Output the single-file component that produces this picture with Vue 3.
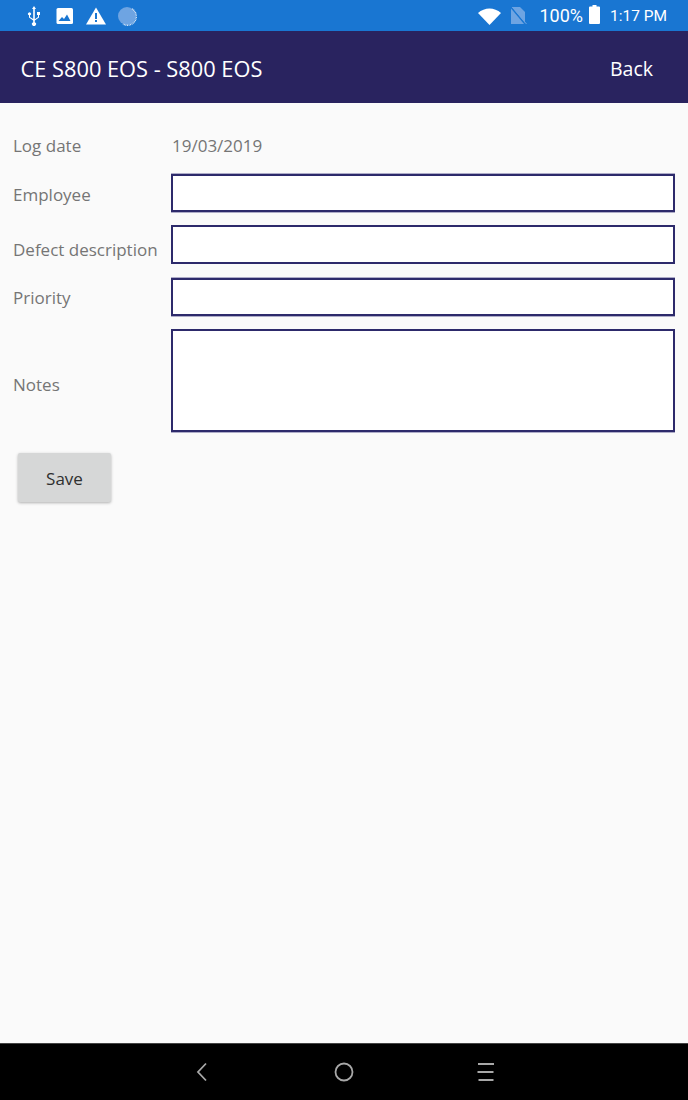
<script setup>
const rows = [
  { label: 'Employee', cls: 'r1' },
  { label: 'Defect description', cls: 'r2' },
  { label: 'Priority', cls: 'r3' },
]
</script>

<template>
  <div class="screen">
    <div class="status">
      <div class="status-left">
        <svg class="ic usb" width="16" height="20" viewBox="0 0 16 20" fill="#fff">
          <path d="M8 0l2 3H8.800v10.200l3.200-2.200V9H11V6h3v3h-1v2.600L8.800 14.600v1.600a2 2 0 1 1-1.600 0v-1.800L3 11.400V9.300a1.500 1.500 0 1 1 1 0v1.600l3.200 2.200V3H6z"/>
        </svg>
        <svg class="ic" width="18" height="18" viewBox="0 0 18 18">
          <rect x="0.500" y="1" width="16.500" height="16" rx="1.500" fill="#fff"/>
          <path d="M2.500 14l3.500-4 2 2 3-4.500 3.500 6.500z" fill="#1976d2"/>
        </svg>
        <svg class="ic warn" width="20" height="18" viewBox="0 0 20 18">
          <path d="M10 0.500L20 17.500H0z" fill="#fff"/>
          <rect x="9" y="6" width="2" height="6" fill="#1976d2"/>
          <rect x="9" y="13" width="2" height="2" fill="#1976d2"/>
        </svg>
        <svg class="ic" width="20" height="20" viewBox="0 0 20 20">
          <circle cx="10" cy="10" r="9" fill="#6ea4e2"/>
          <path d="M15 2.800A8.800 8.800 0 0 1 6 18" fill="none" stroke="#dbe8f8" stroke-width="1.400" stroke-dasharray="1 .6"/>
        </svg>
      </div>
      <div class="status-right">
        <svg class="wifi" width="23" height="18" viewBox="0 0 23 18">
          <path d="M0 6C6.500 0 16.500 0 23 6L11.500 18z" fill="#fff"/>
        </svg>
        <svg class="sim" width="17" height="17" viewBox="0 0 17 17">
          <path d="M1 0h9l5 5v12H1z" fill="#6ea4e2"/>
          <path d="M0 -1l15 18" stroke="#1976d2" stroke-width="1.500"/>
          <path d="M1.500 -1l15 18" stroke="#6ea4e2" stroke-width="1"/>
        </svg>
        <span class="pct">100%</span>
        <svg class="batt" width="11" height="19" viewBox="0 0 11 19">
          <path d="M3.500 0h4v1.500H10a1 1 0 0 1 1 1V18a1 1 0 0 1-1 1H1a1 1 0 0 1-1-1V2.500a1 1 0 0 1 1-1h2.500z" fill="#fff"/>
        </svg>
        <span class="time">1:17 PM</span>
      </div>
    </div>

    <header class="bar">
      <span class="title">CE S800 EOS - S800 EOS</span>
      <span class="back">Back</span>
    </header>

    <main class="content">
      <div class="row date-row">
        <span class="label">Log date</span>
        <span class="value">19/03/2019</span>
      </div>
      <div v-for="r in rows" :key="r.label" class="row" :class="r.cls">
        <span class="label">{{ r.label }}</span>
        <div class="field"></div>
      </div>
      <div class="row notes-row">
        <span class="label">Notes</span>
        <div class="field notes"></div>
      </div>
      <button class="save" type="button">Save</button>
    </main>

    <footer class="nav">
      <svg width="20" height="20" viewBox="0 0 20 20" fill="none" stroke="#a8a8a8" stroke-width="1.800">
        <path d="M14 1.500L6 10l8 8.500"/>
      </svg>
      <svg width="20" height="20" viewBox="0 0 20 20" fill="none" stroke="#a8a8a8" stroke-width="1.800">
        <circle cx="10" cy="10" r="8.500"/>
      </svg>
      <svg width="20" height="20" viewBox="0 0 20 20" fill="none" stroke="#a8a8a8" stroke-width="2.200">
        <path d="M2 2h16M1.500 10h16M2.500 18h15"/>
      </svg>
    </footer>
  </div>
</template>

<style>
html, body { margin: 0; background: #fafafa; }
</style>

<style scoped>
.screen {
  width: 688px;
  height: 1100px;
  display: flex;
  flex-direction: column;
  background: #fafafa;
  font-family: "Open Sans", "Noto Sans", sans-serif;
  overflow: hidden;
}
.status {
  height: 31px;
  flex: none;
  background: #1976d2;
  color: #fff;
  display: flex;
  align-items: center;
  justify-content: space-between;
  padding: 0 21px 0 26px;
  box-sizing: border-box;
  font-family: Roboto, sans-serif;
}
.status-left { display: flex; align-items: center; gap: 12px; }
.status-right { display: flex; align-items: center; }
.ic { display: block; }
.usb { margin-right: 2px; }
.warn { margin-right: -1px; }
.wifi { margin-right: 9px; }
.sim { margin-right: 12px; }
.pct { font-size: 18px; margin-right: 6px; }
.batt { margin-right: 10px; margin-top: -2px; }
.time { font-size: 15.500px; }
.bar {
  height: 72px;
  flex: none;
  background: #29235f;
  color: #fff;
  display: flex;
  align-items: center;
  justify-content: space-between;
  padding: 2px 35px 0 20.500px;
  box-sizing: border-box;
}
.title { font-size: 21.800px; }
.back { font-size: 19.500px; }
.content {
  flex: 1;
  padding: 0 13px;
  color: #757575;
  font-size: 17px;
}
.row {
  display: grid;
  grid-template-columns: 158px 1fr;
  align-items: center;
}
.date-row { height: 38px; margin-top: 23px; margin-bottom: 10px; }
.value { padding-left: 1px; }
.r1 { margin-bottom: 13px; }
.r1 .label { padding-top: 2px; }
.r1 .field, .r3 .field {
  height: 38px;
  box-shadow: 0 -1px 0 #aeacc8, 0 1px 0 #aeacc8;
}
.r2 { margin-bottom: 14px; }
.r2 .label { padding-top: 9px; }
.r3 { margin-bottom: 13px; }
.r3 .label { padding-top: 1px; }
.notes-row .label { padding-top: 7px; }
.field {
  height: 39px;
  box-sizing: border-box;
  background: #fff;
  border: 2px solid #2d2a6b;
}
.notes {
  height: 103px;
  box-shadow: 0 1px 0 #aeacc8;
}
.save {
  display: block;
  width: 93px;
  height: 49px;
  margin: 21px 0 0 5px;
  padding: 2px 0 0;
  border: none;
  border-radius: 2px;
  background: #d6d7d7;
  color: #2f2f2f;
  font: inherit;
  font-size: 17px;
  box-shadow: 0 1px 3px rgba(0, 0, 0, 0.3);
}
.nav {
  height: 57px;
  flex: none;
  background: #000;
  border-top: 1px solid #444;
  box-sizing: border-box;
  display: flex;
  align-items: center;
  justify-content: center;
  gap: 122px;
}
</style>
